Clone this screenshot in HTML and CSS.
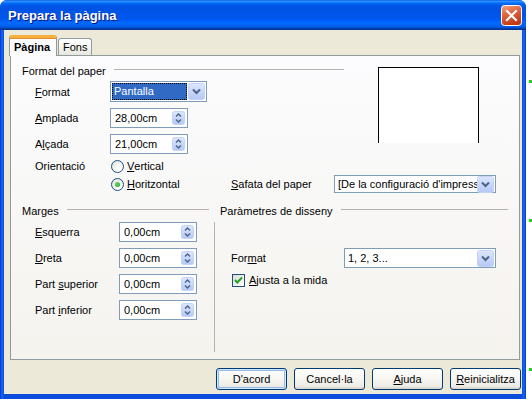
FILE: index.html
```html
<!DOCTYPE html>
<html lang="ca">
<head>
    <meta charset="UTF-8">
    <title>Prepara la pàgina</title>
    <link rel="stylesheet" href="styles.css">
</head>
<body>
<div class="desktop">
    <div class="window">
        <div class="titlebar">
            <span class="title">Prepara la pàgina</span>
            <svg class="close" width="21" height="21" viewBox="0 0 21 21">
                <defs>
                    <linearGradient id="cg" x1="0" y1="0" x2="0.4" y2="1">
                        <stop offset="0" stop-color="#f0a68a"/>
                        <stop offset="0.45" stop-color="#e2653e"/>
                        <stop offset="1" stop-color="#c23b16"/>
                    </linearGradient>
                </defs>
                <rect x="0.5" y="0.5" width="20" height="20" rx="3" fill="url(#cg)" stroke="#fff"/>
                <path d="M6 6 L15 15 M15 6 L6 15" stroke="#fff" stroke-width="2.2" stroke-linecap="square"/>
            </svg>
        </div>
        <div class="client">
            <div class="tabs">
                <span class="tab active">Pàgina</span>
                <span class="tab">Fons</span>
            </div>
            <div class="panel">
                <div class="top">
                    <div class="paper">
                        <div class="legend">Format del paper</div>
                        <div class="row format-row">
                            <span class="label"><u>F</u>ormat</span>
                            <div class="select focus w-format">
                                <span class="value">Pantalla</span>
                                <svg class="drop" width="17" height="17" viewBox="0 0 17 17"><use href="#dropbtn"/></svg>
                            </div>
                        </div>
                        <div class="row">
                            <span class="label"><u>A</u>mplada</span>
                            <div class="spin"><span class="value">28,00cm</span><svg width="13" height="14"><use href="#spinbtn"/></svg></div>
                        </div>
                        <div class="row">
                            <span class="label">A<u>l</u>çada</span>
                            <div class="spin"><span class="value">21,00cm</span><svg width="13" height="14"><use href="#spinbtn"/></svg></div>
                        </div>
                        <div class="row radio-row">
                            <span class="label">Orientació</span>
                            <span class="option"><span class="radio"></span><u>V</u>ertical</span>
                        </div>
                    </div>
                    <div class="preview"></div>
                </div>
                <div class="row radio-row">
                    <span class="label"></span>
                    <span class="option"><span class="radio checked"></span><u>H</u>oritzontal</span>
                    <span class="label tray-label"><u>S</u>afata del paper</span>
                    <div class="select w-tray">
                        <span class="value">[De la configuració d'impressora]</span>
                        <svg class="drop" width="17" height="17" viewBox="0 0 17 17"><use href="#dropbtn"/></svg>
                    </div>
                </div>

                <div class="bottom">
                    <div class="margins">
                        <div class="legend">Marges</div>
                        <div class="row first">
                            <span class="label wide"><u>E</u>squerra</span>
                            <div class="spin"><span class="value">0,00cm</span><svg width="13" height="14"><use href="#spinbtn"/></svg></div>
                        </div>
                        <div class="row">
                            <span class="label wide"><u>D</u>reta</span>
                            <div class="spin"><span class="value">0,00cm</span><svg width="13" height="14"><use href="#spinbtn"/></svg></div>
                        </div>
                        <div class="row">
                            <span class="label wide">Part <u>s</u>uperior</span>
                            <div class="spin"><span class="value">0,00cm</span><svg width="13" height="14"><use href="#spinbtn"/></svg></div>
                        </div>
                        <div class="row">
                            <span class="label wide">Part <u>i</u>nferior</span>
                            <div class="spin"><span class="value">0,00cm</span><svg width="13" height="14"><use href="#spinbtn"/></svg></div>
                        </div>
                    </div>
                    <div class="layout">
                        <div class="legend">Paràmetres de disseny</div>
                        <div class="layout-box">
                            <div class="row">
                                <span class="label layout-label">For<u>m</u>at</span>
                                <div class="select w-layout">
                                    <span class="value">1, 2, 3...</span>
                                    <svg class="drop" width="17" height="17" viewBox="0 0 17 17"><use href="#dropbtn"/></svg>
                                </div>
                            </div>
                            <div class="row check-row">
                                <span class="checkbox">
                                    <svg width="11" height="11" viewBox="0 0 11 11"><path d="M2 5 L4.3 7.5 L9 2.5" fill="none" stroke="#21a121" stroke-width="2"/></svg>
                                </span>
                                <span><u>A</u>justa a la mida</span>
                            </div>
                        </div>
                    </div>
                </div>
            </div>
            <div class="buttons">
                <button class="btn default">D'acord</button>
                <button class="btn">Cancel·la</button>
                <button class="btn"><u>A</u>juda</button>
                <button class="btn"><u>R</u>einicialitza</button>
            </div>
        </div>
    </div>
    <div class="edge">
        <span class="tick t1"></span>
        <span class="tick t2"></span>
        <span class="tick t3"></span>
    </div>
</div>

<svg width="0" height="0" class="defs">
    <defs>
        <linearGradient id="bg" x1="0" y1="0" x2="0" y2="1">
            <stop offset="0" stop-color="#dde7fd"/>
            <stop offset="1" stop-color="#b4c8f6"/>
        </linearGradient>
        <g id="spinbtn">
            <rect x="0.5" y="0.5" width="12" height="13" rx="2" fill="url(#bg)" stroke="#c3d3f8"/>
            <path d="M4 5.5 L6.5 3 L9 5.5 M4 8.5 L6.5 11 L9 8.5" fill="none" stroke="#4d6185" stroke-width="1.4"/>
        </g>
        <g id="dropbtn">
            <rect x="0.5" y="0.5" width="16" height="16" rx="2" fill="url(#bg)" stroke="#c3d3f8"/>
            <path d="M5 6.5 L8.5 10 L12 6.5" fill="none" stroke="#4d6185" stroke-width="2"/>
        </g>
    </defs>
</svg>
</body>
</html>
```

FILE: styles.css
```css
body {
    margin: 0;
    background: #fff;
    font-family: 'Liberation Sans', Arial, sans-serif;
    font-size: 11px;
    color: #000;
}
u {
    text-decoration: underline;
    text-underline-offset: 1px;
}
.defs {
    position: absolute;
}
.desktop {
    display: flex;
}
.window {
    width: 526px;
    height: 399px;
    box-sizing: border-box;
    background: linear-gradient(to right, #0831d9, #166aee 2px, #0a4cdc 4px, #0a4cdc 522px, #166aee, #0831d9);
    border-radius: 7px 7px 0 0;
    display: flex;
    flex-direction: column;
}
.titlebar {
    height: 30px;
    display: flex;
    align-items: center;
    justify-content: space-between;
    padding: 0 4px 0 8px;
    border-radius: 7px 7px 0 0;
    background: linear-gradient(#0058ee 0%, #3593ff 4%, #288eff 6%, #127dff 8%, #036ffc 10%, #0262ee 14%, #0057e5 20%, #0054e3 24%, #0055eb 56%, #005bf5 66%, #026afe 76%, #0062ef 86%, #0052d6 92%, #0040ab 94%, #003092 100%);
}
.title {
    color: #fff;
    font-weight: bold;
    font-size: 13px;
    text-shadow: 1px 1px 0 #0a1883;
    margin-top: 1px;
}
.close {
    display: block;
    margin-top: 1px;
}
.client {
    flex: 1;
    margin: 0 4px 5px 4px;
    background: #ece9d8;
    padding: 5px 0 0 0;
    display: flex;
    flex-direction: column;
}
.tabs {
    display: flex;
    align-items: flex-end;
    padding-left: 5px;
    height: 20px;
    position: relative;
    z-index: 1;
}
.tab {
    height: 17px;
    line-height: 16px;
    padding: 0 4px;
    border: 1px solid #919b9c;
    border-bottom: none;
    border-radius: 3px 3px 0 0;
    background: linear-gradient(#fff, #f3f3ef 60%, #e6e5df);
    box-sizing: border-box;
    margin-left: 1px;
}
.tab.active {
    height: 21px;
    margin-bottom: -1px;
    margin-left: 0;
    width: 48px;
    font-weight: bold;
    background: #fcfcfe;
    border-top: 3px solid #ffc83c;
    box-shadow: inset 0 1px 0 #e68b2c;
    line-height: 18px;
    border-color: #919b9c;
    border-top-color: #f3b13b;
}
.panel {
    margin-left: 6px;
    width: 510px;
    height: 305px;
    box-sizing: border-box;
    border: 1px solid #919b9c;
    background: linear-gradient(#fcfcfe, #f4f3ee);
    padding: 8px 0 0 11px;
}
.top {
    display: flex;
    align-items: flex-start;
}
.paper {
    width: 322px;
}
.legend {
    height: 14px;
    line-height: 14px;
    display: flex;
    align-items: flex-start;
    white-space: nowrap;
}
.legend::after {
    content: "";
    flex: 1;
    height: 1px;
    margin: 5px 0 0 8px;
    background: #b5b4ae;
}
.preview {
    margin: 3px 0 0 34px;
    width: 101px;
    height: 76px;
    box-sizing: border-box;
    background: #fff;
    border: 1px solid #000;
    border-bottom: none;
}
.row {
    display: flex;
    align-items: center;
    height: 20px;
    padding-left: 13px;
    margin-top: 6px;
    white-space: nowrap;
}
.format-row {
    height: 21px;
    margin-top: 3px;
}
.radio-row {
    height: 18px;
    margin-top: 0;
}
.paper .radio-row {
    margin-top: 3px;
}
.label {
    width: 75px;
    flex: none;
}
.label.wide {
    width: 84px;
}
.tray-label {
    width: 103px;
}
.layout-label {
    width: 113px;
}
.option {
    width: 121px;
    display: flex;
    align-items: center;
}
.radio {
    width: 13px;
    height: 13px;
    box-sizing: border-box;
    border: 1px solid #1c5180;
    border-radius: 50%;
    background: radial-gradient(circle at 65% 65%, #fff 20%, #e3e2dc 80%);
    margin: 0 3px 0 1px;
    display: flex;
    align-items: center;
    justify-content: center;
}
.radio.checked::after {
    content: "";
    width: 5px;
    height: 5px;
    border-radius: 50%;
    background: radial-gradient(circle at 40% 40%, #5edc5e, #21a121);
}
.select, .spin {
    display: flex;
    align-items: center;
    height: 100%;
    box-sizing: border-box;
    border: 1px solid #7f9db9;
    background: #fff;
    padding: 1px;
}
.select .value {
    flex: 1;
    overflow: hidden;
    padding-left: 2px;
    white-space: nowrap;
}
.select.focus .value {
    background: #316ac5;
    color: #fff;
    height: 17px;
    line-height: 15px;
    box-sizing: border-box;
    border: 1px dotted #000;
    padding-left: 1px;
    margin-right: 1px;
}
.drop {
    flex: none;
    display: block;
}
.w-format {
    width: 97px;
}
.w-tray {
    width: 162px;
}
.w-layout {
    width: 152px;
}
.spin {
    width: 78px;
    padding-left: 4px;
}
.spin .value {
    flex: 1;
}
.spin svg {
    display: block;
    margin-right: 1px;
}
.bottom {
    display: grid;
    grid-template-columns: 187px 294px;
    column-gap: 5px;
    margin-top: 11px;
}
.margins .row {
    padding-left: 13px;
}
.margins .row.first {
    margin-top: 4px;
}
.layout .legend {
    padding-left: 6px;
}
.layout-box {
    margin-top: 4px;
    height: 110px;
    border-left: 1px solid #b5b4ae;
    padding: 20px 0 0 3px;
}
.check-row {
    height: 18px;
    margin-top: 3px;
    padding-left: 14px;
}
.checkbox {
    width: 13px;
    height: 13px;
    box-sizing: border-box;
    border: 1px solid #1c5180;
    background: linear-gradient(135deg, #dcdbd5, #fff);
    margin-right: 4px;
    display: flex;
    align-items: center;
    justify-content: center;
}
.checkbox svg {
    display: block;
}
.buttons {
    display: flex;
    justify-content: flex-end;
    gap: 7px;
    padding-right: 1px;
    margin-top: 8px;
}
.btn {
    width: 71px;
    height: 22px;
    border: 1px solid #003c74;
    border-radius: 3px;
    background: linear-gradient(#fff, #f4f3ee 60%, #ecebe6 86%, #d6d0c5);
    font-family: 'Liberation Sans', Arial, sans-serif;
    font-size: 11px;
    color: #000;
    padding: 0;
}
.btn.default {
    box-shadow: inset 0 0 0 1px #cee7ff, inset 0 0 0 2px #98b8ea;
}
.edge {
    width: 6px;
    height: 400px;
    display: flex;
    flex-direction: column;
    align-items: flex-end;
}
.tick {
    width: 3px;
    height: 3px;
    background: #19d719;
}
.t1 {
    margin-top: 80px;
}
.t2 {
    margin-top: 136px;
}
.t3 {
    margin-top: 146px;
}
```
